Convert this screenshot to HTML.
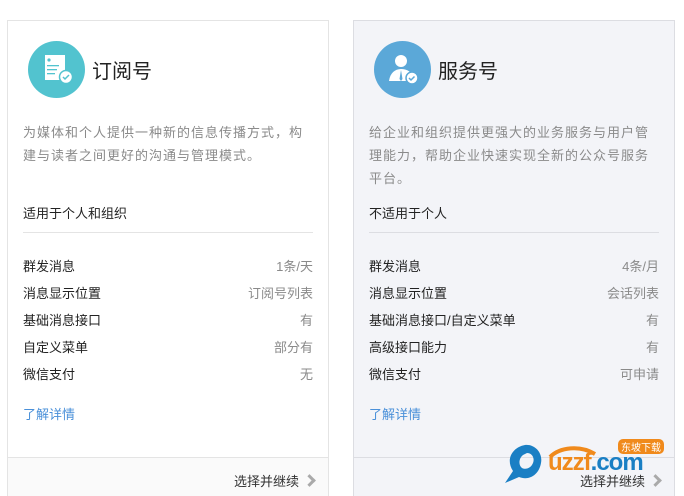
<!DOCTYPE html>
<html><head><meta charset="utf-8"><style>
*{margin:0;padding:0;box-sizing:border-box}
html,body{width:684px;height:496px;overflow:hidden}
body{background:#fff;font-family:"Liberation Sans","Noto Sans CJK SC",sans-serif;position:relative}
.card{position:absolute;top:20px;width:322px;height:476px;border:1px solid #e4e4e4;border-bottom:none}
.c1{left:7px;background:#fff}
.c2{left:353px;background:#f3f4f8;border-color:#dcdde2}
.icon{position:absolute;left:20px;top:20px;width:57px;height:57px;border-radius:50%}
.title{position:absolute;left:84px;top:34px;font-size:20px;color:#222}
.desc{position:absolute;left:15px;top:100px;width:290px;font-size:13px;letter-spacing:1px;line-height:23px;color:#8a8a8a}
.fit{position:absolute;left:15px;top:182px;font-size:13px;color:#222}
.hr{position:absolute;left:15px;right:15px;top:211px;border-top:1px solid #e4e4e4}
.row{position:absolute;left:15px;right:15px;font-size:13px;color:#222;height:20px}
.row span{position:absolute;right:0;color:#8a8a8a}
.more{position:absolute;left:15px;top:383px;font-size:13px;color:#4a90d9}
.foot{position:absolute;left:0;right:0;top:436px;height:60px;border-top:1px solid #e4e4e4;background:#fafafa}
.c2 .foot{background:#f3f4f8;border-color:#dcdde2}
.go{position:absolute;right:14px;top:13px;font-size:13px;color:#333}
.go b{display:inline-block;width:9px;height:9px;border-right:3px solid #aaa;border-top:3px solid #aaa;transform:rotate(45deg);margin-left:6px;margin-bottom:1px}
</style></head><body>
<div class="card c1">
 <div class="icon" style="background:#52c3cf">
  <svg width="57" height="57" viewBox="0 0 57 57"><rect x="17" y="14" width="20" height="25" fill="#fff"/><circle cx="21" cy="19" r="1.6" fill="#52c3cf"/><rect x="19" y="24" width="12" height="1.3" fill="#52c3cf"/><rect x="19" y="28" width="10" height="1.3" fill="#52c3cf"/><rect x="19" y="32" width="8" height="1.3" fill="#52c3cf"/><circle cx="38" cy="36" r="6.5" fill="#fff" stroke="#52c3cf" stroke-width="1.5"/><path d="M35 36l2 2 4-4" stroke="#52c3cf" stroke-width="1.5" fill="none"/></svg>
 </div>
 <div class="title">订阅号</div>
 <div class="desc">为媒体和个人提供一种新的信息传播方式，构建与读者之间更好的沟通与管理模式。</div>
 <div class="fit">适用于个人和组织</div>
 <div class="hr"></div>
 <div class="row" style="top:235px">群发消息<span>1条/天</span></div>
 <div class="row" style="top:262px">消息显示位置<span>订阅号列表</span></div>
 <div class="row" style="top:289px">基础消息接口<span>有</span></div>
 <div class="row" style="top:316px">自定义菜单<span>部分有</span></div>
 <div class="row" style="top:343px">微信支付<span>无</span></div>
 <div class="more">了解详情</div>
 <div class="foot"><div class="go">选择并继续<b></b></div></div>
</div>
<div class="card c2">
 <div class="icon" style="background:#5ba8d8">
  <svg width="57" height="57" viewBox="0 0 57 57"><circle cx="27" cy="20" r="6" fill="#fff"/><path d="M15 40c1-8 6-12 12-12s10 3 11 6v6z" fill="#fff"/><path d="M27 29l-1.5 9 1.5 2 1.5-2z" fill="#5ba8d8"/><circle cx="38" cy="37" r="6" fill="#fff" stroke="#5ba8d8" stroke-width="1.5"/><path d="M35 37l2 2 3.5-3.5" stroke="#5ba8d8" stroke-width="1.5" fill="none"/></svg>
 </div>
 <div class="title">服务号</div>
 <div class="desc">给企业和组织提供更强大的业务服务与用户管理能力，帮助企业快速实现全新的公众号服务平台。</div>
 <div class="fit">不适用于个人</div>
 <div class="hr" style="border-color:#dcdde2"></div>
 <div class="row" style="top:235px">群发消息<span>4条/月</span></div>
 <div class="row" style="top:262px">消息显示位置<span>会话列表</span></div>
 <div class="row" style="top:289px">基础消息接口/自定义菜单<span>有</span></div>
 <div class="row" style="top:316px">高级接口能力<span>有</span></div>
 <div class="row" style="top:343px">微信支付<span>可申请</span></div>
 <div class="more">了解详情</div>
 <div class="foot"><div class="go">选择并继续<b></b></div></div>
</div>
<div style="position:absolute;left:500px;top:437px;width:180px;height:50px">
 <svg width="180" height="50" viewBox="0 0 180 50"><path d="M25 8c-12 2-20 14-12 26l-8 12 14-6c10 4 20-2 22-14 2-10-6-19-16-18zm2 8c5 0 8 5 6 10s-7 7-11 5c-4-3-3-10 1-13z" fill="#1a7fc4"/><path d="M50 20c10-10 30-12 45-3" stroke="#f08a1c" stroke-width="4" fill="none"/></svg>
 <div style="position:absolute;left:48px;top:12px;font:bold 24px 'Liberation Sans',sans-serif;color:#f08a1c;letter-spacing:-1px">uzzf<span style="color:#1a7fc4">.com</span></div>
 <div style="position:absolute;left:118px;top:2px;font-size:10px;color:#fff;background:#f08a1c;border-radius:5px;padding:0 3px;font-family:'Noto Sans CJK SC',sans-serif">东坡下载</div>
</div>
</body></html>
